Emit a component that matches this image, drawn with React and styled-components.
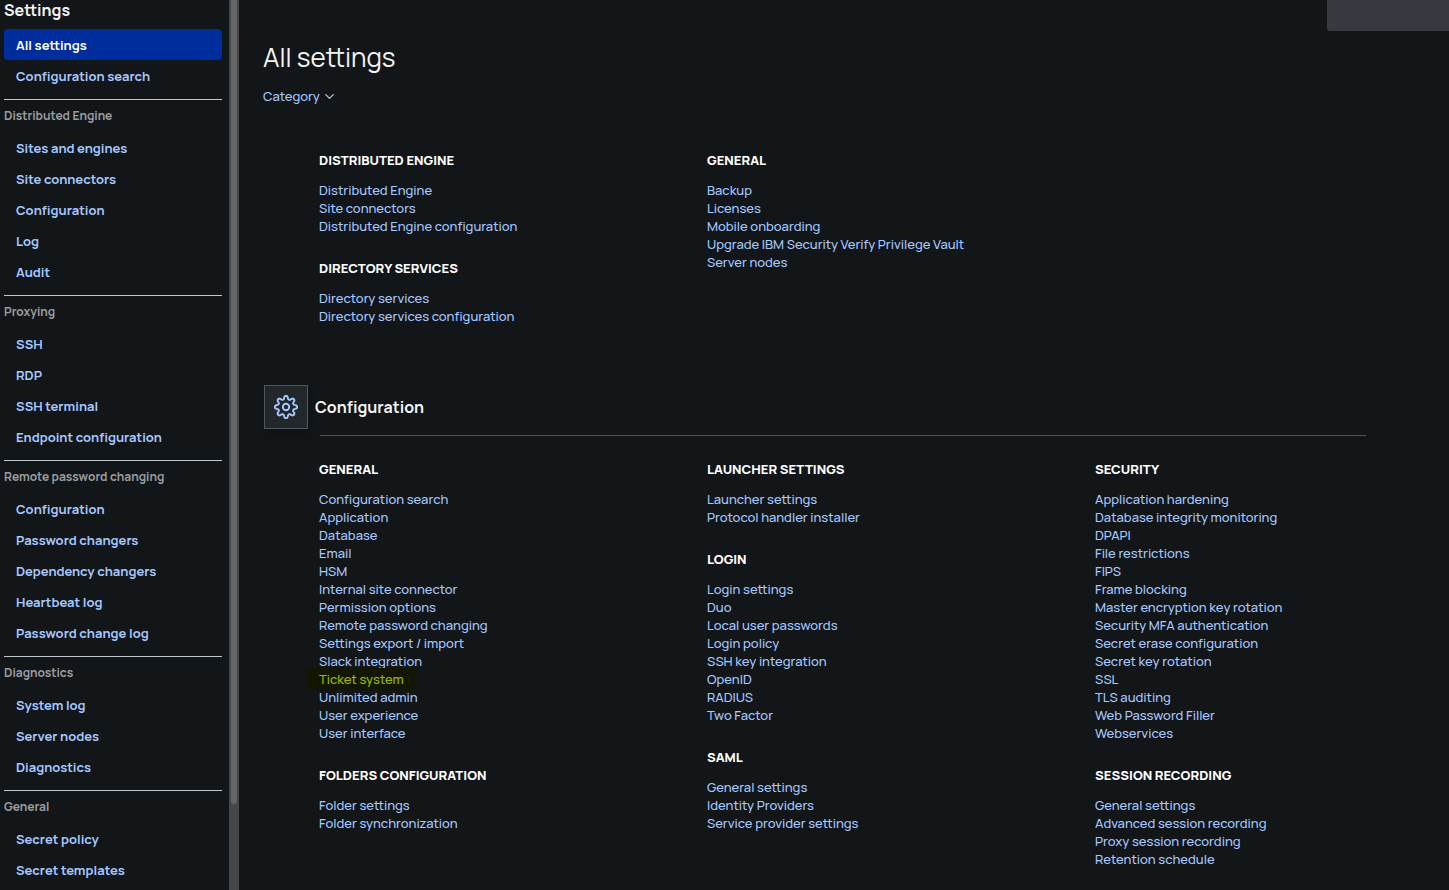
import React from 'react'
import styled, { createGlobalStyle } from 'styled-components'
import { ChevronDown } from 'lucide-react'

const GlobalStyle = createGlobalStyle`
  * {
    box-sizing: border-box;
  }
  body {
    margin: 0;
    background: #121619;
    color: #f4f4f4;
    font-family: Manrope, Inter, 'Open Sans', sans-serif;
    font-size: 13px;
    font-weight: 500;
  }
  a {
    color: #a6c8ff;
    text-decoration: none;
  }
`

const Page = styled.div`
  display: flex;
  min-height: 100vh;
`

const Sidebar = styled.nav`
  flex: none;
  width: 229px;
  padding: 0 7px 4px 4px;
`

const SidebarTitle = styled.h2`
  margin: 0 0 8px;
  font-size: 16px;
  font-weight: 700;
  line-height: 21px;
`

const SidebarSection = styled.section`
  & + & {
    margin-top: 8px;
    border-top: 1px solid #c1c7cd;
  }
`

const SidebarLabel = styled.h3`
  margin: 0;
  color: #9a9da0;
  font-size: 12px;
  font-weight: 700;
  line-height: 32px;
`

const SidebarLink = styled.a`
  display: block;
  padding: 2px 12px 0;
  border-radius: 4px;
  font-weight: 700;
  line-height: 29px;
  background: ${({ $active }) => ($active ? '#002d9c' : 'transparent')};
  color: ${({ $active }) => ($active ? '#ffffff' : '#a6c8ff')};
`

const ScrollTrack = styled.div`
  flex: none;
  width: 10px;
  padding: 0 2px;
  background: #474747;
`

const ScrollThumb = styled.div`
  height: 804px;
  border-radius: 0 0 3px 3px;
  background: #666666;
`

const Main = styled.main`
  flex: 1;
  min-width: 0;
  padding-left: 24px;
`

const TopBar = styled.header`
  display: flex;
  justify-content: flex-end;
`

const TopPanel = styled.div`
  width: 122px;
  height: 31px;
  border-bottom-left-radius: 3px;
  background: #363940;
`

const PageTitle = styled.h1`
  margin: 8px 0 11px;
  font-size: 26px;
  font-weight: 400;
  line-height: 36px;
`

const CategoryButton = styled.button`
  display: flex;
  align-items: center;
  gap: 2px;
  height: 20px;
  padding: 0;
  border: 0;
  background: none;
  color: #a6c8ff;
  font: inherit;
`

const Columns = styled.div`
  display: grid;
  grid-template-columns: repeat(3, 1fr);
  column-gap: 34px;
  margin: ${({ $top }) => $top}px 0 0 56px;
`

const Column = styled.div`
  display: flex;
  flex-direction: column;
  gap: 24px;
`

const GroupTitle = styled.h3`
  margin: 0 0 12px;
  color: #ffffff;
  font-size: 13px;
  font-weight: 800;
  line-height: 18px;
  text-transform: uppercase;
`

const LinkList = styled.ul`
  margin: 0;
  padding: 0;
  list-style: none;
  line-height: 18px;
`

const Highlighted = styled.a`
  margin-left: -12px;
  padding: 2px 12px;
  background: #141700;
  color: #9dba00;
`

const SectionHeader = styled.div`
  display: flex;
  align-items: center;
  gap: 7px;
  margin: 60px 0 0 1px;
`

const IconBox = styled.div`
  display: flex;
  align-items: center;
  justify-content: center;
  width: 44px;
  height: 44px;
  border: 1px solid #50565b;
  background: #21272a;
  color: #a6c8ff;
  box-shadow: 2px 4px 8px rgba(0, 0, 0, 0.2);
`

const SectionTitle = styled.h2`
  margin: 0;
  font-size: 16px;
  font-weight: 700;
`

const SectionRule = styled.hr`
  height: 1px;
  margin: 6px 83px 0 57px;
  border: 0;
  background: #4d5358;
`

const sidebar = [
  { items: ['All settings', 'Configuration search'] },
  {
    label: 'Distributed Engine',
    items: ['Sites and engines', 'Site connectors', 'Configuration', 'Log', 'Audit'],
  },
  { label: 'Proxying', items: ['SSH', 'RDP', 'SSH terminal', 'Endpoint configuration'] },
  {
    label: 'Remote password changing',
    items: ['Configuration', 'Password changers', 'Dependency changers', 'Heartbeat log', 'Password change log'],
  },
  { label: 'Diagnostics', items: ['System log', 'Server nodes', 'Diagnostics'] },
  { label: 'General', items: ['Secret policy', 'Secret templates'] },
]

const overview = [
  [
    {
      title: 'Distributed Engine',
      links: ['Distributed Engine', 'Site connectors', 'Distributed Engine configuration'],
    },
    { title: 'Directory services', links: ['Directory services', 'Directory services configuration'] },
  ],
  [
    {
      title: 'General',
      links: [
        'Backup',
        'Licenses',
        'Mobile onboarding',
        'Upgrade IBM Security Verify Privilege Vault',
        'Server nodes',
      ],
    },
  ],
]

const configuration = [
  [
    {
      title: 'General',
      links: [
        'Configuration search',
        'Application',
        'Database',
        'Email',
        'HSM',
        'Internal site connector',
        'Permission options',
        'Remote password changing',
        'Settings export / import',
        'Slack integration',
        'Ticket system',
        'Unlimited admin',
        'User experience',
        'User interface',
      ],
    },
    { title: 'Folders configuration', links: ['Folder settings', 'Folder synchronization'] },
  ],
  [
    { title: 'Launcher settings', links: ['Launcher settings', 'Protocol handler installer'] },
    {
      title: 'Login',
      links: [
        'Login settings',
        'Duo',
        'Local user passwords',
        'Login policy',
        'SSH key integration',
        'OpenID',
        'RADIUS',
        'Two Factor',
      ],
    },
    { title: 'SAML', links: ['General settings', 'Identity Providers', 'Service provider settings'] },
  ],
  [
    {
      title: 'Security',
      links: [
        'Application hardening',
        'Database integrity monitoring',
        'DPAPI',
        'File restrictions',
        'FIPS',
        'Frame blocking',
        'Master encryption key rotation',
        'Security MFA authentication',
        'Secret erase configuration',
        'Secret key rotation',
        'SSL',
        'TLS auditing',
        'Web Password Filler',
        'Webservices',
      ],
    },
    {
      title: 'Session recording',
      links: ['General settings', 'Advanced session recording', 'Proxy session recording', 'Retention schedule'],
    },
  ],
]

// eight rounded teeth around the hub
const gearPoints = () => {
  const points = []
  for (let i = 0; i < 128; i++) {
    const angle = (i / 128) * Math.PI * 2
    const wave = Math.tanh(1.6 * Math.cos(angle * 8)) / Math.tanh(1.6)
    const radius = 9.5 + 1.6 * wave
    points.push(`${(12 + radius * Math.sin(angle)).toFixed(2)} ${(12 - radius * Math.cos(angle)).toFixed(2)}`)
  }
  return points
}

const GearIcon = () => (
  <svg width="24" height="24" viewBox="0 0 24 24" fill="none" stroke="currentColor" strokeWidth="1.9" strokeLinejoin="round" aria-hidden="true">
    <path d={`M${gearPoints().join('L')}Z`} />
    <circle cx="12" cy="12" r="3.2" />
  </svg>
)

const SettingsColumns = ({ columns, top }) => (
  <Columns $top={top}>
    {columns.map((groups, i) => (
      <Column key={i}>
        {groups.map(({ title, links }) => (
          <section key={title}>
            <GroupTitle>{title}</GroupTitle>
            <LinkList>
              {links.map((link) => (
                <li key={link}>
                  {link === 'Ticket system' ? <Highlighted href="#">{link}</Highlighted> : <a href="#">{link}</a>}
                </li>
              ))}
            </LinkList>
          </section>
        ))}
      </Column>
    ))}
  </Columns>
)

const App = () => (
  <>
    <GlobalStyle />
    <Page>
      <Sidebar>
        <SidebarTitle>Settings</SidebarTitle>
        {sidebar.map(({ label, items }, i) => (
          <SidebarSection key={i}>
            {label && <SidebarLabel>{label}</SidebarLabel>}
            {items.map((item) => (
              <SidebarLink key={item} href="#" $active={item === 'All settings'}>
                {item}
              </SidebarLink>
            ))}
          </SidebarSection>
        ))}
      </Sidebar>
      <ScrollTrack>
        <ScrollThumb />
      </ScrollTrack>
      <Main>
        <TopBar>
          <TopPanel />
        </TopBar>
        <PageTitle>All settings</PageTitle>
        <CategoryButton type="button">
          Category
          <ChevronDown size={15} color="#c1c7cd" />
        </CategoryButton>
        <SettingsColumns columns={overview} top={45} />
        <SectionHeader>
          <IconBox>
            <GearIcon />
          </IconBox>
          <SectionTitle>Configuration</SectionTitle>
        </SectionHeader>
        <SectionRule />
        <SettingsColumns columns={configuration} top={24} />
      </Main>
    </Page>
  </>
)

export default App
